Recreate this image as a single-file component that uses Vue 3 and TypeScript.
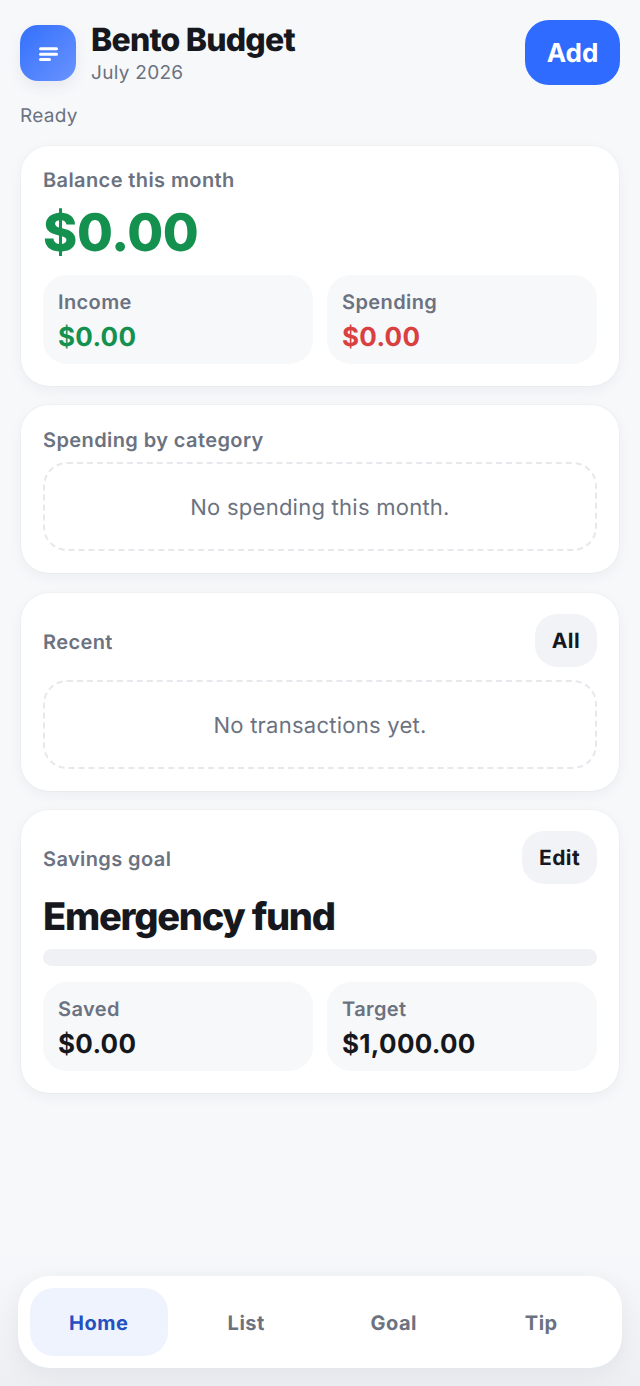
<script setup lang="ts">
const tabs: string[] = ['Home', 'List', 'Goal', 'Tip']
</script>

<template>
  <div class="page">
    <header class="top">
      <div class="brand">
        <div class="logo">
          <svg width="20" height="16" viewBox="0 0 20 16" aria-hidden="true">
            <rect x="1" y="2.2" width="19" height="3" rx="1.5" fill="#fff" />
            <rect x="1" y="7.7" width="19" height="3" rx="1.5" fill="#fff" />
            <rect x="1" y="13" width="12" height="3" rx="1.5" fill="#fff" />
          </svg>
        </div>
        <div class="titles">
          <h1>Bento Budget</h1>
          <p>July 2026</p>
        </div>
      </div>
      <button class="add">Add</button>
    </header>
    <div class="status">Ready</div>

    <section class="card">
      <div class="label">Balance this month</div>
      <div class="balance">$0.00</div>
      <div class="minis">
        <div class="mini">
          <span>Income</span>
          <strong class="green">$0.00</strong>
        </div>
        <div class="mini">
          <span>Spending</span>
          <strong class="red">$0.00</strong>
        </div>
      </div>
    </section>

    <section class="card">
      <div class="label single">Spending by category</div>
      <div class="empty">No spending this month.</div>
    </section>

    <section class="card">
      <div class="row">
        <div class="label">Recent</div>
        <button class="chip">All</button>
      </div>
      <div class="empty">No transactions yet.</div>
    </section>

    <section class="card">
      <div class="row">
        <div class="label">Savings goal</div>
        <button class="chip">Edit</button>
      </div>
      <h2>Emergency fund</h2>
      <div class="track"></div>
      <div class="minis">
        <div class="mini">
          <span>Saved</span>
          <strong>$0.00</strong>
        </div>
        <div class="mini">
          <span>Target</span>
          <strong>$1,000.00</strong>
        </div>
      </div>
    </section>

    <div class="fade"></div>
    <nav class="nav">
      <button v-for="(t, i) in tabs" :key="t" class="tab" :class="{ active: i === 0 }">{{ t }}</button>
    </nav>
  </div>
</template>

<style>
html, body { margin: 0; background: #f7f8fa; }
</style>

<style scoped>
.page {
  box-sizing: border-box;
  width: 640px;
  height: 1386px;
  padding: 20px 21px 0 21px;
  background: #f7f8fa;
  font-family: Inter, "Liberation Sans", sans-serif;
  text-rendering: geometricPrecision;
  color: #16181d;
  position: relative;
  overflow: hidden;
}
button { font-family: inherit; text-rendering: geometricPrecision; border: 0; cursor: pointer; }
.top {
  display: flex;
  align-items: center;
  justify-content: space-between;
  height: 65px;
  margin: 0 -1px 0 -1px;
}
.brand { display: flex; align-items: center; gap: 15px; }
.logo {
  width: 56px;
  height: 56px;
  border-radius: 18px;
  background: linear-gradient(135deg, #3370fb, #6a93ff);
  display: flex;
  align-items: center;
  justify-content: center;
  box-shadow: 0 6px 14px rgba(40, 60, 120, 0.08);
}
.titles h1 {
  margin: 0;
  padding-top: 2px;
  font-size: 32px;
  line-height: 38px;
  font-weight: 800;
  letter-spacing: -0.8px;
}
.titles p {
  margin: 0;
  font-size: 19px;
  line-height: 28px;
  color: #6b7280;
  letter-spacing: 0.3px;
}
.add {
  width: 95px;
  height: 65px;
  padding: 2px 0 0;
  border-radius: 24px;
  background: #2f6bff;
  color: #fff;
  font-size: 26px;
  font-weight: 700;
}
.status {
  margin: 17px 0 0 -1px;
  font-size: 19px;
  line-height: 28px;
  color: #6b7280;
  letter-spacing: 0.3px;
}
.card {
  box-sizing: border-box;
  background: #fff;
  border-radius: 28px;
  padding: 22px;
  margin-top: 19.5px;
  box-shadow: 0 4px 14px rgba(20, 30, 60, 0.05), 0 0 0 1px rgba(20, 30, 60, 0.02);
}
.status + .card { margin-top: 16px; }
.label {
  font-size: 20px;
  line-height: 24px;
  font-weight: 600;
  color: #6b7280;
  letter-spacing: 0.4px;
}
.balance {
  font-size: 52px;
  line-height: 64px;
  font-weight: 800;
  color: #15914f;
  margin-top: 9px;
  letter-spacing: -0.4px;
}
.minis {
  display: grid;
  grid-template-columns: 1fr 1fr;
  gap: 14px;
}
.balance + .minis { margin-top: 9.5px; }
.mini {
  box-sizing: border-box;
  height: 89px;
  padding: 13px 15px;
  border-radius: 24px;
  background: #f7f8fa;
  display: flex;
  flex-direction: column;
}
.mini span {
  font-size: 20px;
  line-height: 28px;
  font-weight: 600;
  color: #6b7280;
  letter-spacing: 0.4px;
}
.mini strong {
  margin-top: 5px;
  font-size: 26px;
  line-height: 34px;
  font-weight: 700;
  letter-spacing: 0.3px;
  color: #16181d;
}
.mini strong.green { color: #15914f; }
.mini strong.red { color: #d9403f; }
.single { margin-top: 1px; margin-bottom: 10px; }
.empty {
  box-sizing: border-box;
  height: 89px;
  padding-top: 3px;
  border: 2px dashed #e6e8ec;
  border-radius: 24px;
  display: flex;
  align-items: center;
  justify-content: center;
  font-size: 22px;
  color: #6b7280;
  letter-spacing: 0.25px;
}
.row {
  display: flex;
  align-items: center;
  justify-content: space-between;
  height: 53px;
  margin-top: -1px;
  margin-bottom: 13px;
}
.row .label { padding-top: 3px; }
.chip {
  height: 53px;
  padding: 2px 17px 0;
  border-radius: 22px;
  background: #f2f3f6;
  color: #16181d;
  font-size: 21px;
  font-weight: 700;
  letter-spacing: 0.4px;
}
h2 {
  margin: 0;
  font-size: 38px;
  line-height: 46px;
  font-weight: 800;
  letter-spacing: -1.25px;
}
.row + h2 { margin-top: -3px; }
.track {
  height: 17px;
  border-radius: 9px;
  background: #f0f1f4;
  margin: 9px 0 16px;
}
.fade {
  position: absolute;
  left: 0;
  right: 0;
  bottom: 0;
  height: 136px;
  background: linear-gradient(to bottom, rgba(238, 240, 243, 0), rgba(236, 238, 242, 0.95));
}
.nav {
  position: absolute;
  left: 18px;
  right: 18px;
  bottom: 18px;
  height: 92px;
  box-sizing: border-box;
  padding: 12px;
  background: #fff;
  border-radius: 32px;
  display: grid;
  grid-template-columns: repeat(4, 1fr);
  gap: 10px;
  box-shadow: 0 6px 24px rgba(20, 30, 60, 0.06);
}
.tab {
  padding: 2px 0 0;
  background: transparent;
  border-radius: 24px;
  font-size: 20px;
  font-weight: 700;
  color: #6b7280;
  letter-spacing: 0.5px;
}
.tab.active {
  background: #eff3fe;
  color: #2450c0;
}
</style>
